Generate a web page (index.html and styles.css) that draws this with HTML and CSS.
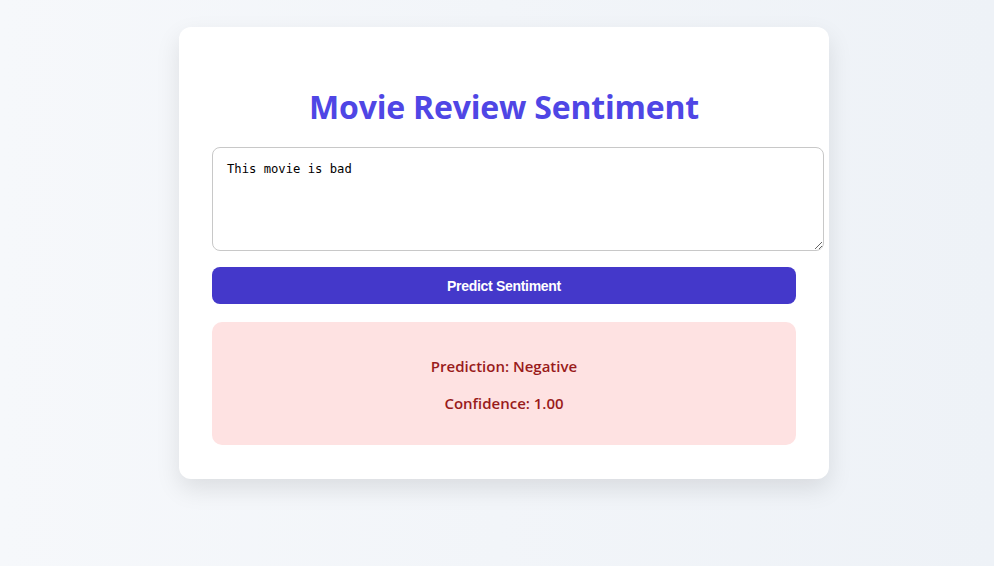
FILE: index.html
```html
<!DOCTYPE html>
<html lang="en">
<head>
<meta charset="utf-8">
<title>Movie Review Sentiment</title>
<link rel="stylesheet" href="styles.css">
</head>
<body>
<main class="page">
  <section class="card">
    <h1 class="title">Movie Review Sentiment</h1>
    <textarea class="review" rows="5">This movie is bad</textarea>
    <button class="predict" type="button">Predict Sentiment</button>
    <div class="result negative">
      <p class="result-line">Prediction: Negative</p>
      <p class="result-line">Confidence: 1.00</p>
    </div>
  </section>
</main>
</body>
</html>
```

FILE: styles.css
```css
* { margin: 0; }
html, body { height: 100%; }
body {
  background: linear-gradient(90deg, #f6f8fb 0%, #eef2f7 100%);
  font-family: "Open Sans", "Noto Sans", sans-serif;
}
.page {
  display: flex;
  justify-content: center;
  padding: 27px 0 0 14px;
}
.card {
  width: 584px;
  padding: 33px 33px 34px;
  background: #ffffff;
  border-radius: 12px;
  box-shadow: 0 10px 25px rgba(0, 0, 0, 0.1);
  display: flex;
  flex-direction: column;
}
.title {
  margin: 24px 0 17px;
  line-height: 46px;
  font-size: 32px;
  font-weight: 700;
  color: #4f46e5;
  text-align: center;
  letter-spacing: -0.2px;
}
.review {
  width: 584px;
  height: 77px;
  padding: 13px 12px 12px 14px;
  border: 1px solid #c8c8c8;
  border-radius: 8px;
  font-family: "DejaVu Sans Mono", monospace;
  font-size: 12.2px;
  line-height: 16px;
  color: #000;
  resize: vertical;
  outline: none;
}
.predict {
  margin-top: 16px;
  height: 37px;
  border: none;
  border-radius: 8px;
  background: #4438ca;
  color: #ffffff;
  font-family: "Liberation Sans", Arial, sans-serif;
  font-weight: 700;
  font-size: 14px;
  letter-spacing: -0.3px;
}
.result {
  margin-top: 18px;
  padding: 33px 20px 31px;
  border-radius: 10px;
  display: flex;
  flex-direction: column;
  gap: 15px;
  text-align: center;
}
.result.negative {
  background: #fee2e2;
  color: #991b1b;
}
.result-line {
  font-size: 15px;
  font-weight: 600;
  line-height: 22px;
}
```
